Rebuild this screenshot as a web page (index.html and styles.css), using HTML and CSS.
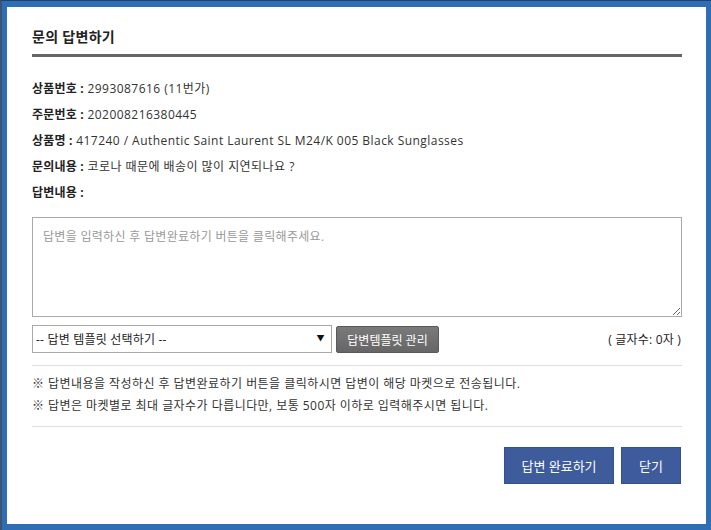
FILE: index.html
```html
<html>
<head>
    <link rel="stylesheet" href="styles.css">
</head>
<body>
    <div class="dialog">
        <h2 class="title">문의 답변하기</h2>

        <ul class="info">
            <li><b>상품번호 :</b> 2993087616 (11번가)</li>
            <li><b>주문번호 :</b> 202008216380445</li>
            <li><b>상품명 :</b> 417240 / Authentic Saint Laurent SL M24/K 005 Black Sunglasses</li>
            <li><b>문의내용 :</b> 코로나 때문에 배송이 많이 지연되나요 ?</li>
            <li><b>답변내용 :</b></li>
        </ul>

        <textarea class="answer" placeholder="답변을 입력하신 후 답변완료하기 버튼을 클릭해주세요."></textarea>

        <div class="tools">
            <div class="select-wrap">
                <select class="template">
                    <option>-- 답변 템플릿 선택하기 --</option>
                </select>
            </div>
            <button class="btn-gray">답변템플릿 관리</button>
            <span class="count">( 글자수: 0자 )</span>
        </div>

        <div class="notes">
            <p>※ 답변내용을 작성하신 후 답변완료하기 버튼을 클릭하시면 답변이 해당 마켓으로 전송됩니다.</p>
            <p>※ 답변은 마켓별로 최대 글자수가 다릅니다만, 보통 500자 이하로 입력해주시면 됩니다.</p>
        </div>

        <div class="actions">
            <button class="btn-blue btn-wide">답변 완료하기</button>
            <button class="btn-blue btn-close">닫기</button>
        </div>
    </div>
</body>
</html>
```

FILE: styles.css
```css
html{
    background:#2f6db5;
}
body{
    margin:0;
    padding:6px 5px 6px 5px;
    border-top:1px solid #22426e;
    border-left:2px solid #3d5470;
    font-family:"Open Sans","Noto Sans CJK KR",sans-serif;
    font-size:12px;
    letter-spacing:0.45px;
    color:#333;
}
.dialog{
    background:#fff;
    height:517px;
    box-sizing:border-box;
    padding:0 24px 0 25px;
}
.title{
    margin:0;
    padding:20px 0 7px;
    font-size:14px;
    line-height:20px;
    font-weight:bold;
    letter-spacing:0.3px;
    color:#222;
    border-bottom:3px solid #666;
}
.info{
    list-style:none;
    margin:0;
    padding:19px 0 0;
}
.info li{
    line-height:26px;
    height:26px;
}
.info b{
    color:#222;
    letter-spacing:0.2px;
}
.answer{
    display:block;
    width:100%;
    height:100px;
    margin-top:11px;
    box-sizing:border-box;
    border:1px solid #a9a9a9;
    padding:11px 10px;
    font-family:inherit;
    font-size:12px;
    letter-spacing:0.3px;
    line-height:16px;
    color:#333;
    resize:vertical;
}
.answer::placeholder{
    color:#999;
}
.tools{
    display:flex;
    align-items:center;
    gap:4px;
    margin-top:8px;
    padding-bottom:12px;
    border-bottom:1px solid #ddd;
}
.select-wrap{
    position:relative;
    width:300px;
    height:28px;
}
.select-wrap::after{
    content:"▼";
    position:absolute;
    right:7px;
    top:8px;
    font-size:8px;
    line-height:10px;
    color:#111;
    pointer-events:none;
}
.template{
    -webkit-appearance:none;
    appearance:none;
    width:100%;
    height:28px;
    box-sizing:border-box;
    border:1px solid #a9a9a9;
    background:#fff;
    padding:0 3px;
    font-family:inherit;
    font-size:12px;
    letter-spacing:0.2px;
    color:#222;
}
.btn-gray{
    height:27px;
    width:103px;
    margin-top:1px;
    border:1px solid #5a5a5a;
    border-radius:2px;
    background:linear-gradient(#7a7a7a,#666);
    color:#fff;
    font-family:inherit;
    font-size:12px;
    padding:0;
}
.count{
    margin-left:auto;
    padding-right:1px;
    letter-spacing:0.2px;
    color:#222;
}
.notes{
    padding:7px 0 9px;
    border-bottom:1px solid #ddd;
}
.notes p{
    margin:0;
    line-height:22px;
    color:#333;
}
.actions{
    display:flex;
    justify-content:flex-end;
    gap:7px;
    margin-top:20px;
    padding-right:1px;
}
.btn-blue{
    height:37px;
    border:1px solid #35508c;
    background:#3e5b9c;
    color:#fff;
    font-family:inherit;
    font-size:13px;
    padding:0;
}
.btn-wide{
    width:110px;
}
.btn-close{
    width:60px;
}
```
